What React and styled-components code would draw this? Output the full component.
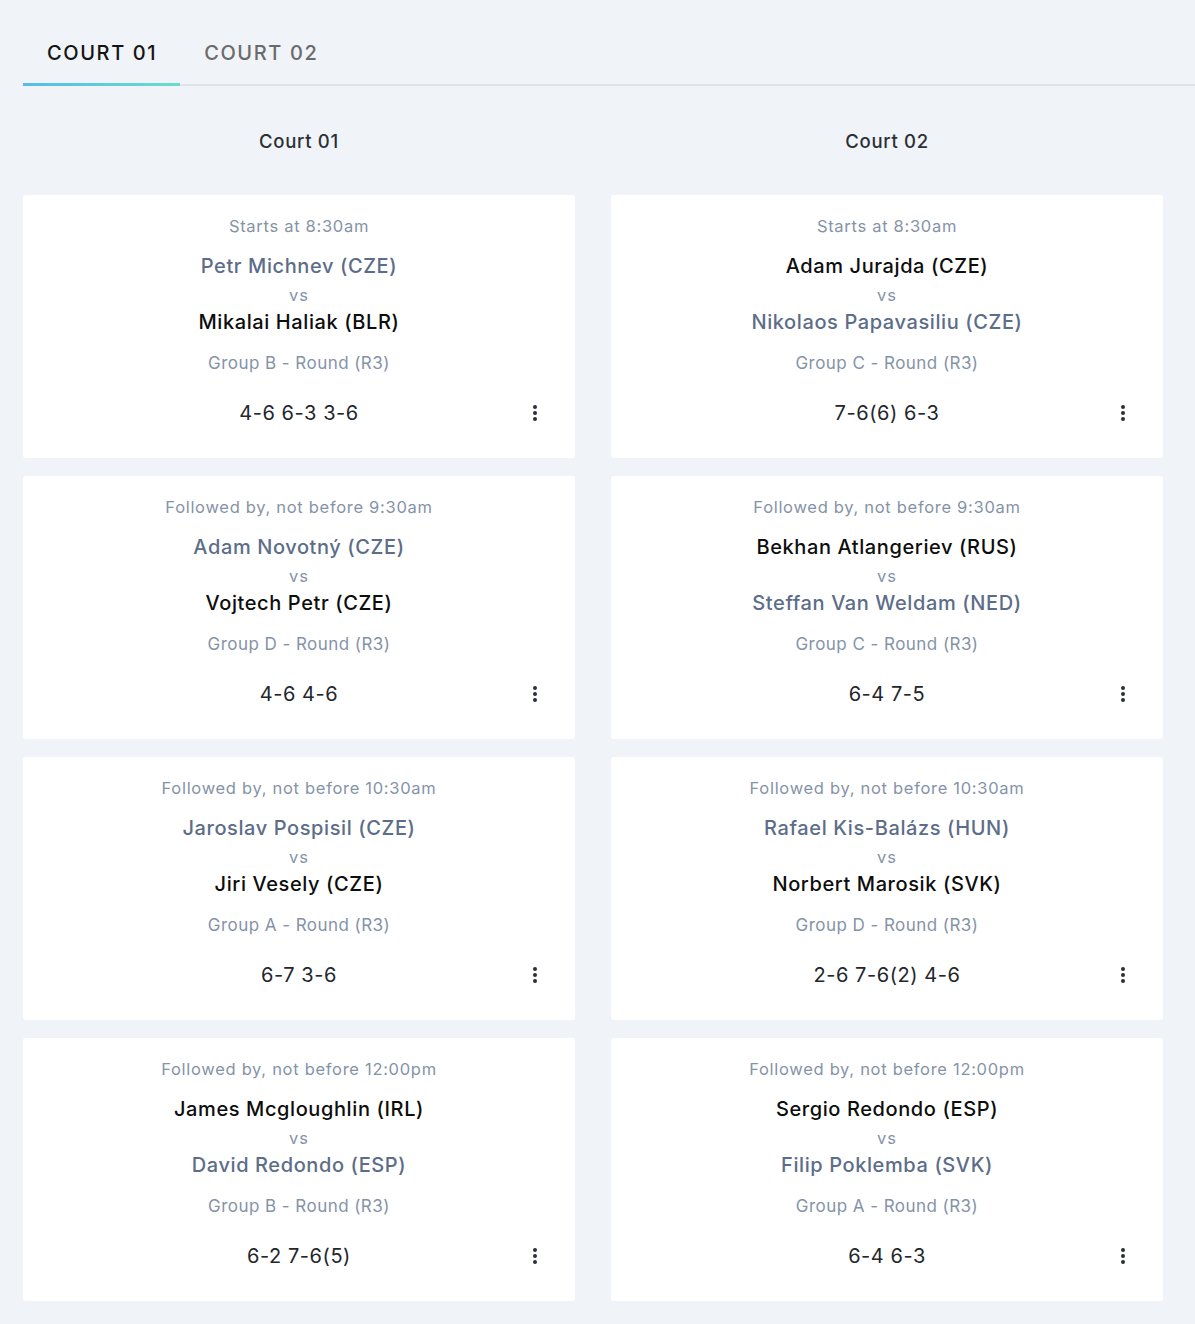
import React, { useState } from 'react';
import styled, { createGlobalStyle } from 'styled-components';

const Global = createGlobalStyle`
  html, body {
    margin: 0;
    background: #f0f3f8;
    font-family: Inter, "Noto Sans", "Liberation Sans", sans-serif;
  }
`;

const Page = styled.div`
  padding: 24px 0 24px 23px;
  box-sizing: border-box;
`;

const Tabs = styled.div`
  display: flex;
  border-bottom: 2px solid #dfe3e9;
`;

const Tab = styled.button`
  background: none;
  border: none;
  font-family: inherit;
  font-size: 20px;
  font-weight: 500;
  letter-spacing: 1.6px;
  color: ${p => (p.active ? '#141414' : '#6b6b6b')};
  padding: 17px 23px 18px 24px;
  margin-bottom: -2px;
  cursor: pointer;
  border-bottom: 3px solid transparent;
  border-image: ${p => (p.active ? 'linear-gradient(90deg, #56bbec, #6bdccb) 1' : 'none')};
`;

const Grid = styled.div`
  width: 1140px;
  display: grid;
  grid-template-columns: 1fr 1fr;
  column-gap: 36px;
`;

const Column = styled.div`
  display: flex;
  flex-direction: column;
  gap: 18px;
`;

const ColumnTitle = styled.div`
  text-align: center;
  font-size: 18.5px;
  font-weight: 500;
  letter-spacing: 0.7px;
  color: #2b2f36;
  line-height: 24px;
  padding: 43px 0 42px;
  margin-bottom: -18px;
`;

const Card = styled.div`
  background: #fff;
  border-radius: 3px;
  padding: 17px 0 31px;
  display: flex;
  flex-direction: column;
  align-items: center;
  text-align: center;
`;

const Time = styled.div`
  font-size: 16.5px;
  letter-spacing: 0.7px;
  line-height: 28px;
  color: #8593a8;
`;

const Player = styled.div`
  font-size: 20px;
  letter-spacing: 0.6px;
  line-height: 26px;
  font-weight: 500;
  color: ${p => (p.home ? '#5c6d89' : '#0d0d0d')};
  margin-top: ${p => p.mt}px;
`;

const Vs = styled.div`
  font-size: 16.5px;
  letter-spacing: 1px;
  line-height: 22px;
  color: #8593a8;
  margin-top: 5px;
`;

const Group = styled.div`
  font-size: 17px;
  letter-spacing: 0.45px;
  line-height: 24px;
  color: #8593a8;
  margin-top: 16px;
`;

const ScoreRow = styled.div`
  position: relative;
  align-self: stretch;
  margin-top: 24px;
  text-align: center;
`;

const Score = styled.span`
  font-size: 20px;
  letter-spacing: 0.55px;
  line-height: 28px;
  color: #23262b;
`;

const MenuButton = styled.button`
  position: absolute;
  right: 30px;
  top: 2px;
  width: 20px;
  height: 24px;
  padding: 0;
  border: none;
  background: none;
  display: flex;
  align-items: center;
  justify-content: center;
  cursor: pointer;
`;

const Dots = () => (
  <svg width="6" height="18" viewBox="0 0 6 18">
    <circle cx="3" cy="3" r="2" fill="#2b2f36" />
    <circle cx="3" cy="9" r="2" fill="#2b2f36" />
    <circle cx="3" cy="15" r="2" fill="#2b2f36" />
  </svg>
);

const courts = [
  {
    title: 'Court 01',
    matches: [
      { time: 'Starts at 8:30am', a: 'Petr Michnev (CZE)', b: 'Mikalai Haliak (BLR)', home: 'a', group: 'Group B - Round (R3)', score: '4-6 6-3 3-6' },
      { time: 'Followed by, not before 9:30am', a: 'Adam Novotný (CZE)', b: 'Vojtech Petr (CZE)', home: 'a', group: 'Group D - Round (R3)', score: '4-6 4-6' },
      { time: 'Followed by, not before 10:30am', a: 'Jaroslav Pospisil (CZE)', b: 'Jiri Vesely (CZE)', home: 'a', group: 'Group A - Round (R3)', score: '6-7 3-6' },
      { time: 'Followed by, not before 12:00pm', a: 'James Mcgloughlin (IRL)', b: 'David Redondo (ESP)', home: 'b', group: 'Group B - Round (R3)', score: '6-2 7-6(5)' },
    ],
  },
  {
    title: 'Court 02',
    matches: [
      { time: 'Starts at 8:30am', a: 'Adam Jurajda (CZE)', b: 'Nikolaos Papavasiliu (CZE)', home: 'b', group: 'Group C - Round (R3)', score: '7-6(6) 6-3' },
      { time: 'Followed by, not before 9:30am', a: 'Bekhan Atlangeriev (RUS)', b: 'Steffan Van Weldam (NED)', home: 'b', group: 'Group C - Round (R3)', score: '6-4 7-5' },
      { time: 'Followed by, not before 10:30am', a: 'Rafael Kis-Balázs (HUN)', b: 'Norbert Marosik (SVK)', home: 'a', group: 'Group D - Round (R3)', score: '2-6 7-6(2) 4-6' },
      { time: 'Followed by, not before 12:00pm', a: 'Sergio Redondo (ESP)', b: 'Filip Poklemba (SVK)', home: 'b', group: 'Group A - Round (R3)', score: '6-4 6-3' },
    ],
  },
];

function MatchCard({ m }) {
  return (
    <Card>
      <Time>{m.time}</Time>
      <Player mt={13} home={m.home === 'a'}>{m.a}</Player>
      <Vs>vs</Vs>
      <Player mt={3} home={m.home === 'b'}>{m.b}</Player>
      <Group>{m.group}</Group>
      <ScoreRow>
        <Score>{m.score}</Score>
        <MenuButton aria-label="more"><Dots /></MenuButton>
      </ScoreRow>
    </Card>
  );
}

export default function App() {
  const [tab, setTab] = useState(0);
  return (
    <Page>
      <Global />
      <Tabs>
        <Tab active={tab === 0} onClick={() => setTab(0)}>COURT 01</Tab>
        <Tab active={tab === 1} onClick={() => setTab(1)}>COURT 02</Tab>
      </Tabs>
      <Grid>
        {courts.map(c => (
          <Column key={c.title}>
            <ColumnTitle>{c.title}</ColumnTitle>
            {c.matches.map((m, i) => <MatchCard key={i} m={m} />)}
          </Column>
        ))}
      </Grid>
    </Page>
  );
}
